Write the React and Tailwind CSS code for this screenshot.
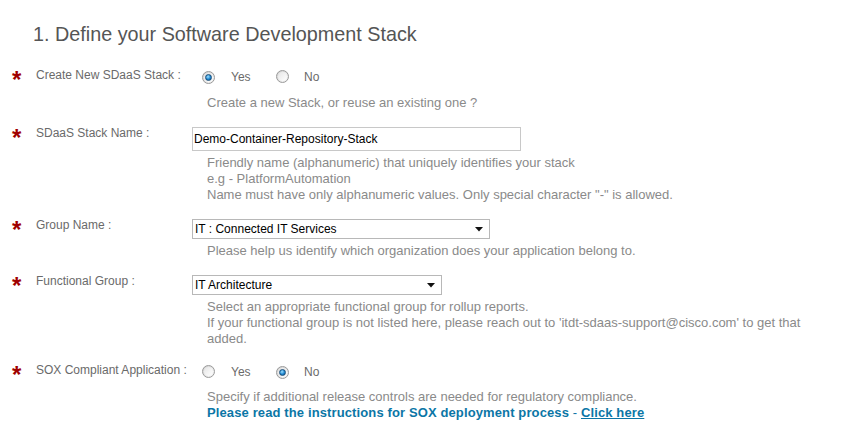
import React from "react";

function Star() {
  return (
    <div className="w-[36px] shrink-0 pl-[12px]">
      <span className="block text-[24px] leading-[16px] font-bold text-[#a00000] mt-[5px] h-[16px]">*</span>
    </div>
  );
}

function Radio({ checked }) {
  return (
    <span className="relative inline-flex items-center justify-center w-[13px] h-[13px] rounded-full border border-[#9a9a9a] bg-[linear-gradient(135deg,#d2d2d2,#f7f7f7)] shrink-0">
      <span className="w-[9px] h-[9px] rounded-full bg-[linear-gradient(135deg,#e6e6e6,#ffffff)] flex items-center justify-center">
        {checked && (
          <span className="w-[7px] h-[7px] rounded-full border border-[#1a4f7a] bg-[radial-gradient(circle_at_40%_35%,#9ee0ff,#1d86d0_55%,#0d4f8a)]" />
        )}
      </span>
    </span>
  );
}

function RadioPair({ yes }) {
  return (
    <div className="flex items-center h-[16px] mt-[2px] text-[12px] leading-[16px] text-[#6a6a6a]">
      <span className="ml-[10px]"><Radio checked={yes} /></span>
      <span className="ml-[16px] w-[21px]">Yes</span>
      <span className="ml-[24px]"><Radio checked={!yes} /></span>
      <span className="ml-[15px]">No</span>
    </div>
  );
}

function Select({ value, width }) {
  return (
    <div
      className={`flex items-center justify-between h-[20px] mt-[2px] border border-[#b8b8b8] bg-white pl-[2px] pr-[6px] text-[12px] leading-[16px] text-black ${width}`}
    >
      <span>{value}</span>
      <svg width="8" height="5" viewBox="0 0 8 5">
        <polygon points="0,0 8,0 4,4.5" fill="#111" />
      </svg>
    </div>
  );
}

function Label({ children }) {
  return (
    <div className="w-[156px] shrink-0 text-[12px] leading-[16px] text-[#6a6a6a] whitespace-nowrap">{children}</div>
  );
}

export default function App() {
  return (
    <div className="w-[856px] h-[448px] bg-white font-['Liberation_Sans',Arial,sans-serif] overflow-hidden">
      <h1 className="pt-[22px] pl-[33px] text-[19.8px] leading-[24px] text-[#555] font-normal">
        1. Define your Software Development Stack
      </h1>

      <div className="flex mt-[21px]">
        <Star />
        <Label>Create New SDaaS Stack :</Label>
        <div>
          <RadioPair yes={true} />
          <div className="mt-[10px] pl-[15px] text-[13px] leading-[16px] text-[#8a8a8a]">
            Create a new Stack, or reuse an existing one ?
          </div>
        </div>
      </div>

      <div className="flex mt-[14px]">
        <Star />
        <Label>SDaaS Stack Name :</Label>
        <div>
          <div className="w-[329px] h-[24px] mt-[2px] border border-[#c8c8c8] flex items-center pl-[1px] text-[12px] text-black">
            Demo-Container-Repository-Stack
          </div>
          <div className="mt-[4px] pl-[15px] w-[630px] text-[13px] leading-[16px] text-[#8a8a8a]">
            <div>Friendly name (alphanumeric) that uniquely identifies your stack</div>
            <div>e.g - PlatformAutomation</div>
            <div>Name must have only alphanumeric values. Only special character "-" is allowed.</div>
          </div>
        </div>
      </div>

      <div className="flex mt-[14px]">
        <Star />
        <Label>Group Name :</Label>
        <div>
          <Select value="IT : Connected IT Services" width="w-[298px]" />
          <div className="mt-[4px] pl-[15px] text-[13px] leading-[16px] text-[#8a8a8a]">
            Please help us identify which organization does your application belong to.
          </div>
        </div>
      </div>

      <div className="flex mt-[14px]">
        <Star />
        <Label>Functional Group :</Label>
        <div>
          <Select value="IT Architecture" width="w-[250px]" />
          <div className="mt-[4px] pl-[15px] w-[630px] text-[13px] leading-[16px] text-[#8a8a8a]">
            <div>Select an appropriate functional group for rollup reports.</div>
            <div>
              If your functional group is not listed here, please reach out to 'itdt-sdaas-support@cisco.com' to get that added.
            </div>
          </div>
        </div>
      </div>

      <div className="flex mt-[15px]">
        <Star />
        <Label>SOX Compliant Application :</Label>
        <div>
          <RadioPair yes={false} />
          <div className="mt-[9px] pl-[15px] text-[13px] leading-[16px] text-[#8a8a8a]">
            <div>Specify if additional release controls are needed for regulatory compliance.</div>
            <div className="text-[#0b76a6] tracking-[0.12px]">
              <span className="font-bold">Please read the instructions for SOX deployment process</span>
              <span> - </span>
              <span className="font-bold underline">Click here</span>
            </div>
          </div>
        </div>
      </div>
    </div>
  );
}
